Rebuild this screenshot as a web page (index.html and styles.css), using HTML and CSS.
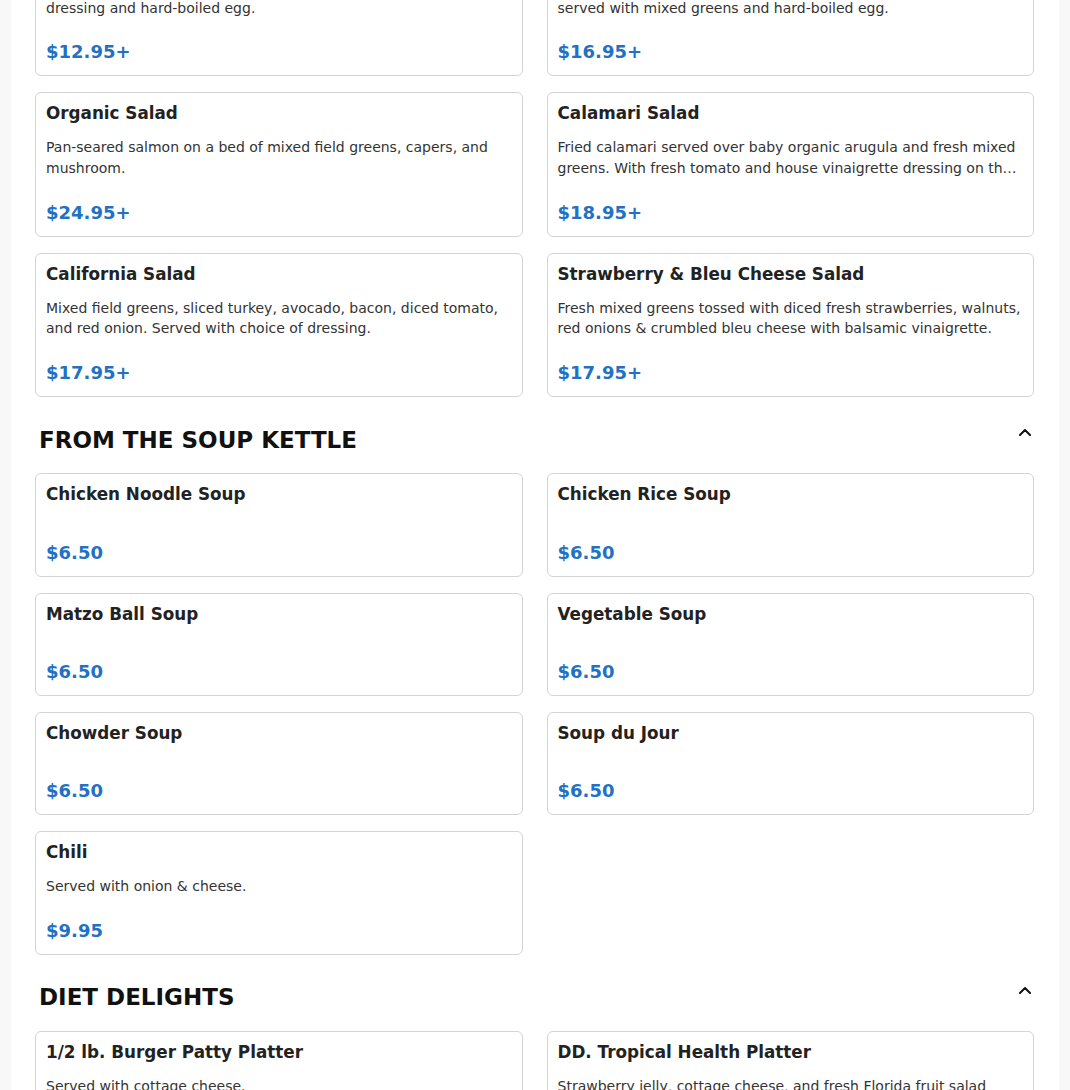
FILE: index.html
```html
<!DOCTYPE html>
<html lang="en">
<head>
<meta charset="utf-8">
<title>Menu</title>
<link rel="stylesheet" href="styles.css">
</head>
<body>
<main class="page">
  <div class="menu">
    <section class="section section-first">
      <div class="grid">
        <article class="card">
          <h3 class="card-title">Chef's Salad</h3>
          <p class="card-desc">Sliced turkey, ham, swiss cheese and tomato over greens with dressing and hard-boiled egg.</p>
          <div class="card-price">$12.95+</div>
        </article>
        <article class="card">
          <h3 class="card-title">Cobb Salad</h3>
          <p class="card-desc">Grilled chicken breast, avocado, bacon, tomato and bleu cheese, served with mixed greens and hard-boiled egg.</p>
          <div class="card-price">$16.95+</div>
        </article>
        <article class="card">
          <h3 class="card-title">Organic Salad</h3>
          <p class="card-desc">Pan-seared salmon on a bed of mixed field greens, capers, and mushroom.</p>
          <div class="card-price">$24.95+</div>
        </article>
        <article class="card">
          <h3 class="card-title">Calamari Salad</h3>
          <p class="card-desc">Fried calamari served over baby organic arugula and fresh mixed greens. With fresh tomato and house vinaigrette dressing on the side.</p>
          <div class="card-price">$18.95+</div>
        </article>
        <article class="card">
          <h3 class="card-title">California Salad</h3>
          <p class="card-desc">Mixed field greens, sliced turkey, avocado, bacon, diced tomato, and red onion. Served with choice of dressing.</p>
          <div class="card-price">$17.95+</div>
        </article>
        <article class="card">
          <h3 class="card-title">Strawberry &amp; Bleu Cheese Salad</h3>
          <p class="card-desc">Fresh mixed greens tossed with diced fresh strawberries, walnuts, red onions &amp; crumbled bleu cheese with balsamic vinaigrette.</p>
          <div class="card-price">$17.95+</div>
        </article>
      </div>
    </section>

    <section class="section">
      <header class="section-head">
        <h2 class="section-title">FROM THE SOUP KETTLE</h2>
        <button class="toggle" type="button" aria-label="Collapse">
          <svg class="chevron" viewBox="0 0 12 8" width="12" height="8"><polyline points="1,7 6,2 11,7" fill="none" stroke="#111" stroke-width="2" stroke-linecap="round" stroke-linejoin="round"/></svg>
        </button>
      </header>
      <div class="grid">
        <article class="card">
          <h3 class="card-title">Chicken Noodle Soup</h3>
          <p class="card-desc"></p>
          <div class="card-price">$6.50</div>
        </article>
        <article class="card">
          <h3 class="card-title">Chicken Rice Soup</h3>
          <p class="card-desc"></p>
          <div class="card-price">$6.50</div>
        </article>
        <article class="card">
          <h3 class="card-title">Matzo Ball Soup</h3>
          <p class="card-desc"></p>
          <div class="card-price">$6.50</div>
        </article>
        <article class="card">
          <h3 class="card-title">Vegetable Soup</h3>
          <p class="card-desc"></p>
          <div class="card-price">$6.50</div>
        </article>
        <article class="card">
          <h3 class="card-title">Chowder Soup</h3>
          <p class="card-desc"></p>
          <div class="card-price">$6.50</div>
        </article>
        <article class="card">
          <h3 class="card-title">Soup du Jour</h3>
          <p class="card-desc"></p>
          <div class="card-price">$6.50</div>
        </article>
        <article class="card">
          <h3 class="card-title">Chili</h3>
          <p class="card-desc">Served with onion &amp; cheese.</p>
          <div class="card-price">$9.95</div>
        </article>
      </div>
    </section>

    <section class="section">
      <header class="section-head">
        <h2 class="section-title">DIET DELIGHTS</h2>
        <button class="toggle" type="button" aria-label="Collapse">
          <svg class="chevron" viewBox="0 0 12 8" width="12" height="8"><polyline points="1,7 6,2 11,7" fill="none" stroke="#111" stroke-width="2" stroke-linecap="round" stroke-linejoin="round"/></svg>
        </button>
      </header>
      <div class="grid">
        <article class="card">
          <h3 class="card-title">1/2 lb. Burger Patty Platter</h3>
          <p class="card-desc">Served with cottage cheese.</p>
          <div class="card-price">$16.95</div>
        </article>
        <article class="card">
          <h3 class="card-title">DD. Tropical Health Platter</h3>
          <p class="card-desc">Strawberry jelly, cottage cheese, and fresh Florida fruit salad served with a toasted bagel.</p>
          <div class="card-price">$15.95</div>
        </article>
      </div>
    </section>
  </div>
</main>
</body>
</html>
```

FILE: styles.css
```css
* {
  box-sizing: border-box;
}

html, body {
  margin: 0;
  padding: 0;
}

body {
  background: #f8f8f8;
  font-family: "DejaVu Sans", Verdana, sans-serif;
  color: #222;
}

.page {
  width: 1048px;
  margin: 0 auto;
  background: #fff;
  padding: 0 25px 40px 24px;
  min-height: 1200px;
}

.menu {
  margin-top: -68px;
}

.section {
  margin-top: 25px;
}

.section-first {
  margin-top: 0;
}

.section-head {
  display: flex;
  justify-content: space-between;
  align-items: flex-start;
  padding: 0 3px 0 4px;
  margin-bottom: 17.5px;
}

.section-title {
  margin: 0;
  padding-top: 1.5px;
  font-size: 23px;
  line-height: 32px;
  font-weight: 700;
  color: #111;
}

.toggle {
  border: 0;
  background: none;
  padding: 0;
  margin-top: 6px;
  width: 12px;
  height: 8px;
  display: flex;
  cursor: pointer;
}

.chevron {
  display: block;
}

.grid {
  display: grid;
  grid-template-columns: 1fr 1fr;
  column-gap: 24px;
  row-gap: 16px;
}

.card {
  border: 1px solid #d4d4d4;
  border-radius: 6px;
  padding: 8px 10px 10px;
  background: #fff;
}

.card-title {
  margin: 0;
  font-size: 16.8px;
  line-height: 24px;
  font-weight: 700;
  color: #222;
}

.card-desc {
  margin: 12px 0 0;
  font-size: 14px;
  line-height: 20.6px;
  color: #333;
  display: -webkit-box;
  -webkit-line-clamp: 2;
  -webkit-box-orient: vertical;
  overflow: hidden;
}

.card-price {
  margin-top: 20.25px;
  font-size: 18px;
  line-height: 27px;
  font-weight: 700;
  color: #2271c3;
}
```
